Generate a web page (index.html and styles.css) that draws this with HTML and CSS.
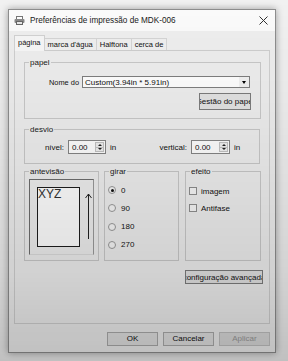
FILE: index.html
```html
<!DOCTYPE html>
<html lang="pt">
<head>
<meta charset="utf-8">
<title>Preferências de impressão</title>
<link rel="stylesheet" href="styles.css">
</head>
<body>
<div class="dialog">
  <div class="titlebar">
    <svg class="ticon" width="11" height="9" viewBox="0 0 11 9">
      <rect x="2.5" y="0.5" width="6" height="3" fill="#fff" stroke="#777"/>
      <rect x="0.5" y="3" width="10" height="4" rx="1" fill="#8a8a8a"/>
      <rect x="2.5" y="5.5" width="6" height="3" fill="#e8e8e8" stroke="#666"/>
    </svg>
    <span class="title">Preferências de impressão de MDK-006</span>
    <svg class="close" width="9" height="9" viewBox="0 0 9 9">
      <path d="M0.5 0.5 L8.5 8.5 M8.5 0.5 L0.5 8.5" stroke="#333" stroke-width="1"/>
    </svg>
  </div>

  <div class="tabs">
    <div class="tab active">página</div>
    <div class="tab">marca d'água</div>
    <div class="tab">Halftona</div>
    <div class="tab">cerca de</div>
  </div>

  <div class="panel">
    <fieldset class="group papel">
      <legend>papel</legend>
      <div class="gb papel-body">
        <div class="name-row">
          <span class="lbl">Nome do</span>
          <div class="combo">
            <span class="combo-text">Custom(3.94in * 5.91in)</span>
            <span class="drop"><span class="tri-down"></span></span>
          </div>
        </div>
        <div class="btn-row">
          <button class="btn clip paper-btn"><span>Gestão do papel</span></button>
        </div>
      </div>
    </fieldset>

    <fieldset class="group desvio">
      <legend>desvio</legend>
      <div class="gb desvio-body">
        <div class="offset-grid">
          <span class="olbl">nível:</span>
          <div class="spin"><span class="val">0.00</span><span class="arrows"><span class="up"><i class="tri-up"></i></span><span class="dn"><i class="tri-dn"></i></span></span></div>
          <span class="unit">in</span>
          <span class="olbl">vertical:</span>
          <div class="spin"><span class="val">0.00</span><span class="arrows"><span class="up"><i class="tri-up"></i></span><span class="dn"><i class="tri-dn"></i></span></span></div>
          <span class="unit">in</span>
        </div>
      </div>
    </fieldset>

    <div class="lower">
      <fieldset class="group preview">
        <legend>antevisão</legend>
        <div class="gb preview-body">
          <div class="frame">
            <div class="sheet">XYZ</div>
            <svg class="arrow" width="7" height="47" viewBox="0 0 7 47">
              <path d="M3.5 1 V46 M0.5 5 L3.5 1 L6.5 5" stroke="#222" stroke-width="1" fill="none"/>
            </svg>
          </div>
        </div>
      </fieldset>

      <fieldset class="group rotate">
        <legend>girar</legend>
        <div class="gb opts">
          <div class="opt"><span class="radio on"></span><span>0</span></div>
          <div class="opt"><span class="radio"></span><span>90</span></div>
          <div class="opt"><span class="radio"></span><span>180</span></div>
          <div class="opt"><span class="radio"></span><span>270</span></div>
        </div>
      </fieldset>

      <fieldset class="group effect">
        <legend>efeito</legend>
        <div class="gb checks">
          <div class="opt"><span class="check"></span><span>imagem</span></div>
          <div class="opt"><span class="check"></span><span>Antifase</span></div>
        </div>
      </fieldset>
    </div>

    <div class="adv-row">
      <button class="btn clip adv"><span>configuração avançada</span></button>
    </div>
  </div>

  <div class="footer">
    <button class="btn fbtn">OK</button>
    <button class="btn fbtn">Cancelar</button>
    <button class="btn fbtn disabled">Aplicar</button>
  </div>
</div>
<div class="shade"></div>
</body>
</html>
```

FILE: styles.css
```css
html, body {
  margin: 0;
}
body {
  height: 361px;
  box-sizing: border-box;
  padding: 9px 0 0 8px;
  background: #f1f1f1;
  font-family: "Liberation Sans", Arial, sans-serif;
  font-size: 8px;
  color: #111;
  overflow: hidden;
}

.dialog {
  width: 268px;
  box-sizing: border-box;
  border: 1px solid #8e8e8e;
  background: #efefef;
  box-shadow: 0 0 7px rgba(0, 0, 0, 0.35);
  display: flex;
  flex-direction: column;
  padding-bottom: 6px;
}

.titlebar {
  height: 21px;
  background: #fbfbfb;
  display: flex;
  align-items: center;
  padding: 0 7px 0 5px;
}
.ticon { margin-right: 5px; }
.title { flex: 1; color: #1a1a1a; font-size: 8.2px; }

.tabs {
  display: flex;
  align-items: flex-end;
  padding: 0 5px;
  margin-top: 4px;
  height: 16px;
  position: relative;
  z-index: 1;
  font-size: 7.5px;
}
.tab {
  height: 12px;
  line-height: 11px;
  padding: 0 3px;
  border: 1px solid #d2d2d2;
  border-bottom: none;
  background: #ececec;
  margin-bottom: 1px;
  box-sizing: border-box;
}
.tab + .tab { border-left: none; }
.tab.active {
  height: 16px;
  line-height: 13px;
  margin-bottom: 0;
  background: #f3f3f3;
  border-color: #cfcfcf;
  padding: 0 3px;
}

.panel {
  margin: -1px 5px 0;
  height: 274px;
  box-sizing: border-box;
  border: 1px solid #d0d0d0;
  background: #efefef;
  padding: 7px 8px 0 9px;
  display: flex;
  flex-direction: column;
}

.group {
  margin: 0;
  padding: 0;
  min-width: 0;
  border: 1px solid #c9c9c9;
}
.group legend {
  padding: 0 1px;
  margin-left: 4px;
  line-height: 9px;
  color: #1a1a1a;
}

/* papel */
.papel-body {
  padding: 9px 10px 8px 24px;
}
.name-row {
  display: flex;
  align-items: center;
  height: 12px;
}
.lbl { width: 33px; font-size: 7.4px; }
.combo {
  flex: 1;
  height: 12px;
  box-sizing: border-box;
  border: 1px solid #7f7f7f;
  background: #fff;
  display: flex;
  align-items: center;
  padding-left: 2px;
}
.combo-text { flex: 1; }
.drop {
  width: 10px;
  height: 10px;
  background: #f2f2f2;
  display: flex;
  align-items: center;
  justify-content: center;
}
.tri-down {
  width: 0;
  height: 0;
  border-left: 2.5px solid transparent;
  border-right: 2.5px solid transparent;
  border-top: 3px solid #000;
}
.btn-row {
  display: flex;
  justify-content: flex-end;
  margin-top: 5px;
  margin-right: -1px;
}

.btn {
  appearance: none;
  margin: 0;
  padding: 0;
  font: inherit;
  color: #111;
  border: 1px solid #acacac;
  background: #e3e3e3;
  box-sizing: border-box;
  white-space: nowrap;
}
.clip {
  display: flex;
  align-items: center;
  justify-content: center;
  overflow: hidden;
}
.clip span { flex: none; }
.paper-btn {
  width: 52px;
  height: 17px;
  border-color: #7d7d7d;
}

/* desvio */
.desvio {
  margin-top: 6px;
  margin-right: 1px;
}
.desvio-body {
  padding: 6px 0 9px 15px;
}
.offset-grid {
  display: grid;
  grid-template-columns: 28px 38px 44px 41px 39px auto;
  align-items: center;
  height: 14px;
}
.olbl {
  text-align: right;
  padding-right: 4px;
}
.unit { padding-left: 4px; }
.spin {
  height: 14px;
  box-sizing: border-box;
  border: 1px solid #868686;
  background: #fff;
  display: flex;
  align-items: center;
}
.val { flex: 1; padding-left: 3px; }
.arrows {
  width: 9px;
  height: 10px;
  margin-right: 1px;
  display: flex;
  flex-direction: column;
  border: 1px solid #c4c4c4;
  box-sizing: border-box;
  background: #f1f1f1;
}
.arrows .up, .arrows .dn {
  flex: 1;
  display: flex;
  align-items: center;
  justify-content: center;
}
.arrows .up { border-bottom: 1px solid #c4c4c4; }
.tri-up {
  width: 0; height: 0;
  border-left: 2px solid transparent;
  border-right: 2px solid transparent;
  border-bottom: 2px solid #222;
}
.tri-dn {
  width: 0; height: 0;
  border-left: 2px solid transparent;
  border-right: 2px solid transparent;
  border-top: 2px solid #222;
}

/* lower row */
.lower {
  display: flex;
  margin-top: 3px;
  margin-right: -1px;
}
.preview {
  width: 75px;
  box-sizing: border-box;
}
.preview-body {
  padding: 3px 4px 5px 4px;
}
.rotate {
  width: 75px;
  box-sizing: border-box;
  margin-left: 5px;
}
.effect {
  width: 76px;
  box-sizing: border-box;
  margin-left: 6px;
}

.frame {
  height: 76px;
  box-sizing: border-box;
  border-top: 1px solid #6e6e6e;
  border-left: 1px solid #6e6e6e;
  border-right: 1px solid #9a9a9a;
  border-bottom: 1px solid #dcdcdc;
  padding: 7px 0 0 7px;
  display: flex;
  align-items: flex-start;
}
.sheet {
  width: 43px;
  height: 60px;
  box-sizing: border-box;
  border: 1px solid #1e1e1e;
  background: #fff;
  font-size: 12px;
  line-height: 12px;
  color: #333;
}
.arrow {
  margin: 6px 0 0 5px;
}

.opts, .checks {
  display: flex;
  flex-direction: column;
}
.opts { gap: 8.3px; padding: 9px 0 0 3px; }
.checks { gap: 7px; padding: 10px 0 0 2px; }
.opt {
  display: flex;
  align-items: center;
  height: 10px;
}
.radio {
  width: 8px;
  height: 8px;
  box-sizing: border-box;
  border: 1px solid #9a9a9a;
  border-radius: 50%;
  background: #f7f7f7;
  margin-right: 5px;
  display: flex;
  align-items: center;
  justify-content: center;
}
.radio.on::after {
  content: "";
  width: 3px;
  height: 3px;
  border-radius: 50%;
  background: #111;
}
.check {
  width: 8px;
  height: 8px;
  box-sizing: border-box;
  border: 1px solid #8f8f8f;
  background: #f8f8f8;
  margin-right: 4px;
  margin-left: 1px;
}

.adv-row {
  display: flex;
  justify-content: flex-end;
  margin-top: 9px;
  margin-right: -2px;
}
.adv {
  width: 78px;
  height: 14px;
  border-color: #7d7d7d;
}

/* footer */
.footer {
  display: flex;
  justify-content: flex-end;
  gap: 5px;
  padding: 0 5px;
  margin-top: 8px;
}
.fbtn {
  width: 51px;
  height: 14px;
  line-height: 12px;
}
.fbtn.disabled {
  color: #9a9a9a;
  border-color: #c2c2c2;
  background: #dcdcdc;
}

.shade {
  position: fixed;
  inset: 0;
  pointer-events: none;
  background: linear-gradient(180deg, rgba(0,0,0,0) 0%, rgba(0,0,0,0.04) 30%, rgba(0,0,0,0.12) 75%, rgba(0,0,0,0.2) 100%);
}
```
